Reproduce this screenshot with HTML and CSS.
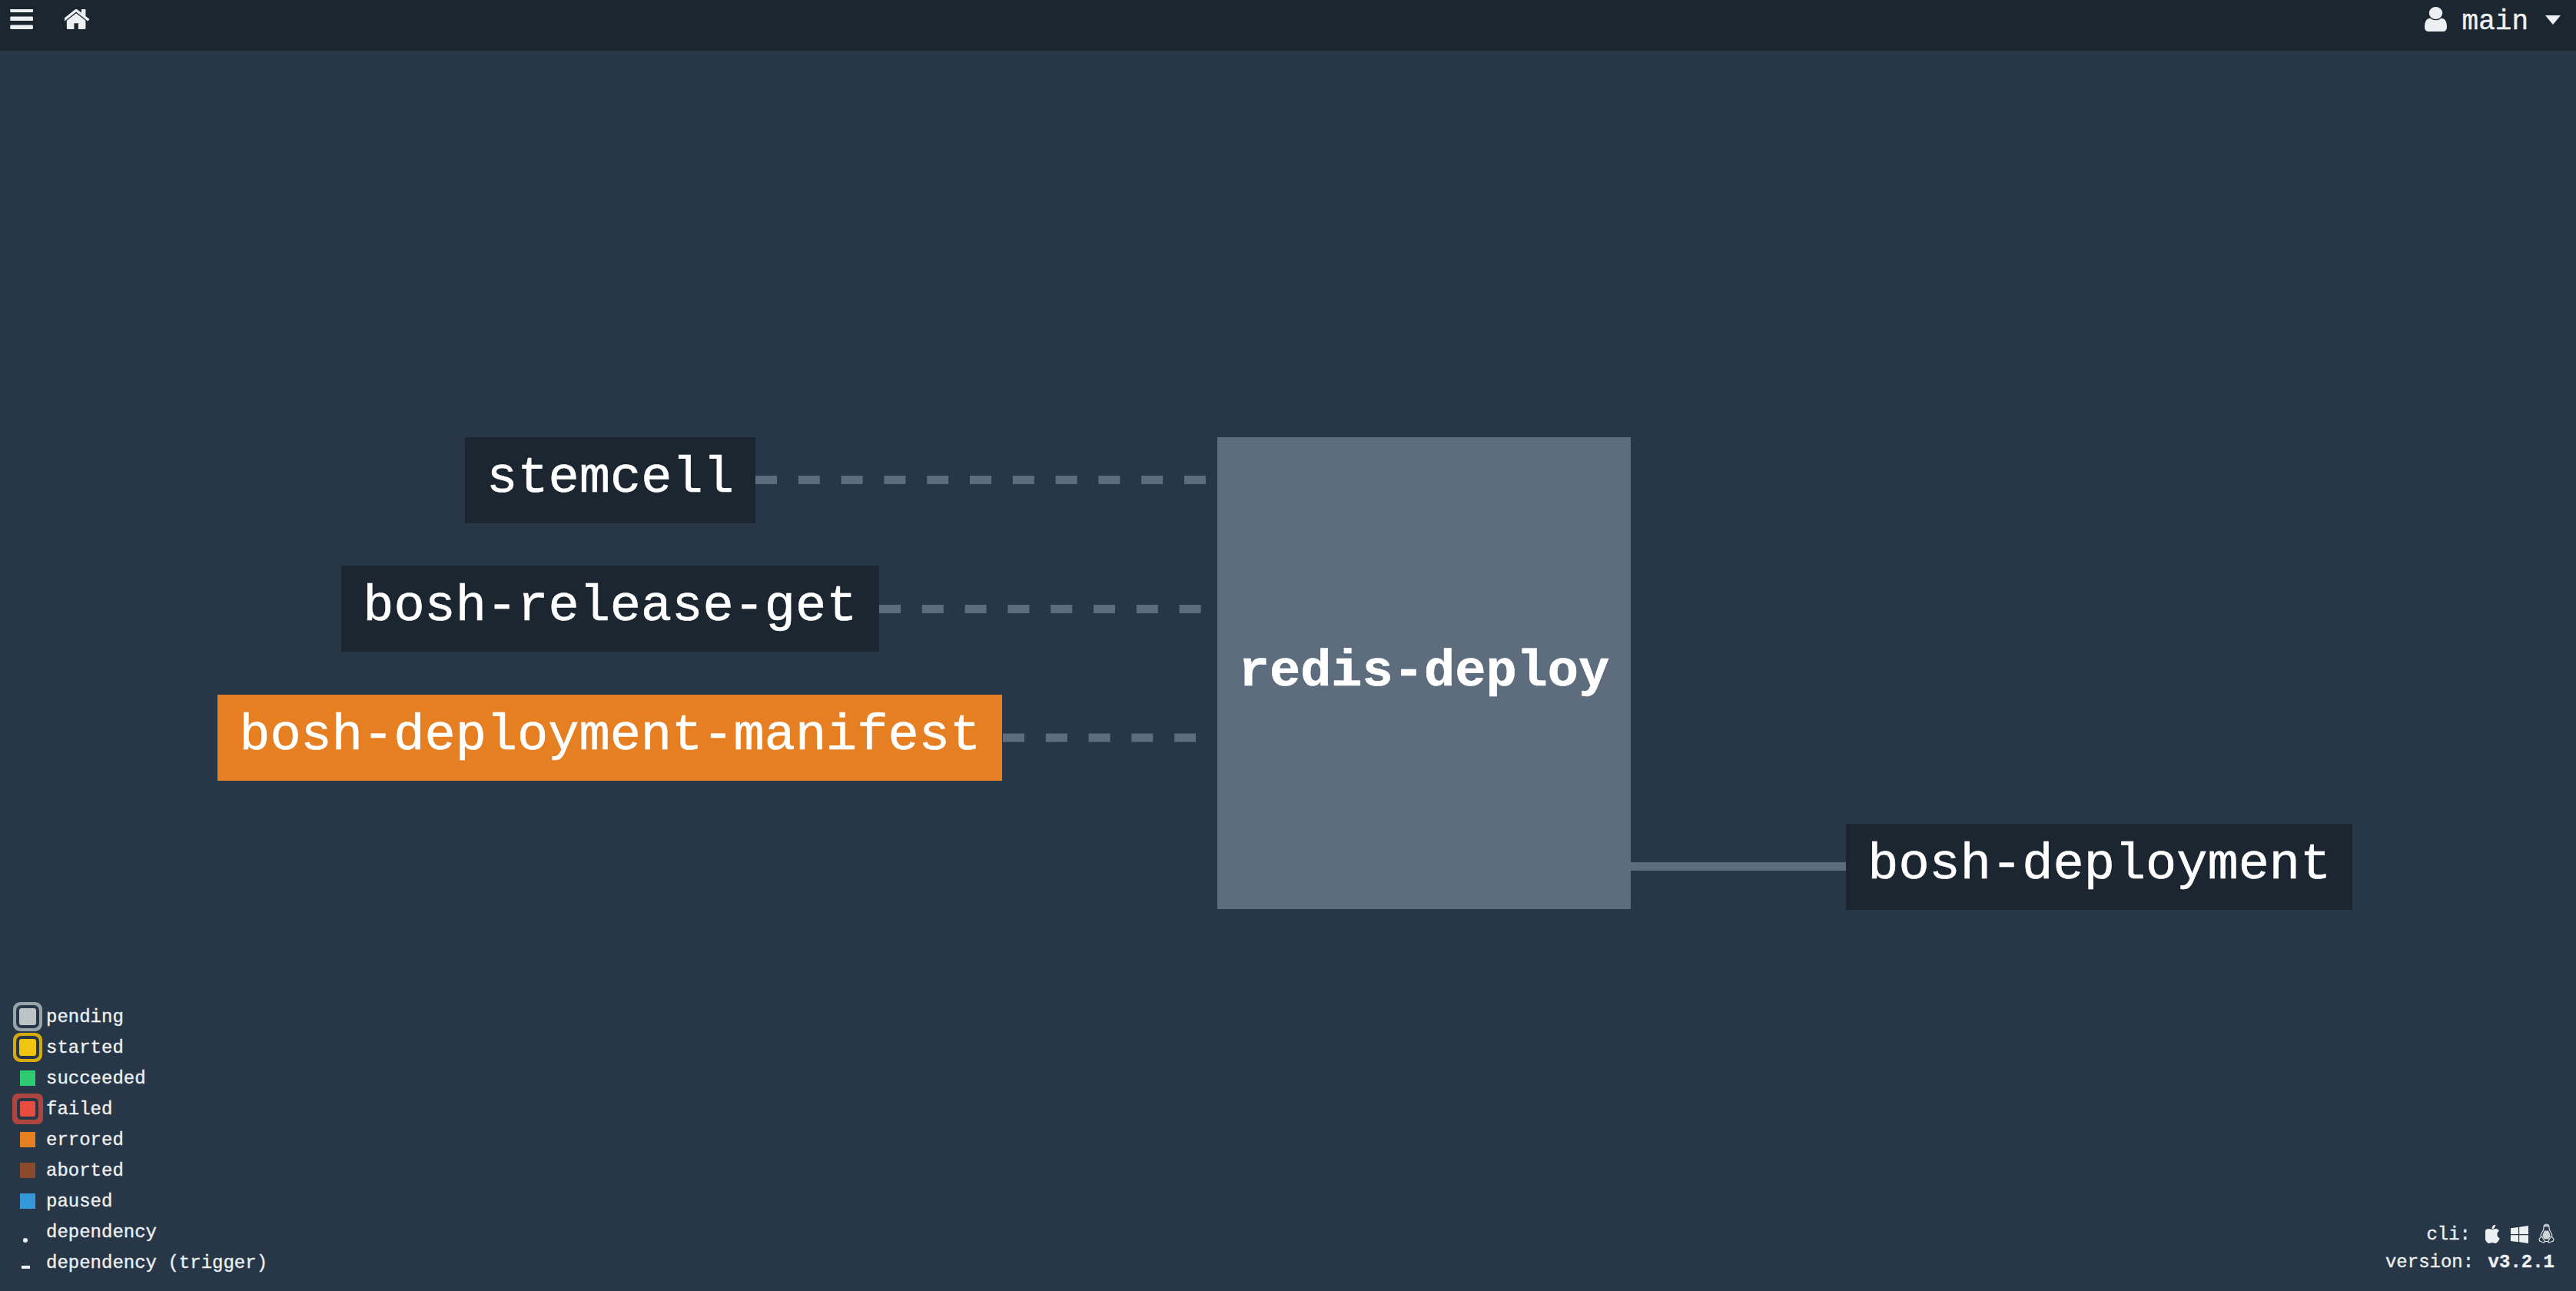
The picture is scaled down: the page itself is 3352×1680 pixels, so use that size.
FILE: index.html
```html
<!DOCTYPE html>
<html lang="en">
<head>
    <meta charset="UTF-8">
    <meta name="viewport" content="width=device-width, initial-scale=1.0">
    <title>main - redis</title>
    <link rel="stylesheet" href="styles.css">
</head>
<body>
    <header class="topbar">
        <a class="bar-icon menu-icon" href="#">
            <svg viewBox="64 320 1600 1216" width="31" height="26" preserveAspectRatio="none"><path d="M1664 1344v128q0 26-19 45t-45 19h-1408q-26 0-45-19t-19-45v-128q0-26 19-45t45-19h1408q26 0 45 19t19 45zm0-512v128q0 26-19 45t-45 19h-1408q-26 0-45-19t-19-45v-128q0-26 19-45t45-19h1408q26 0 45 19t19 45zm0-512v128q0 26-19 45t-45 19h-1408q-26 0-45-19t-19-45v-128q0-26 19-45t45-19h1408q26 0 45 19t19 45z"/></svg>
        </a>
        <a class="bar-icon home-icon" href="#">
            <svg viewBox="122 256 1548 1280" width="33" height="26" preserveAspectRatio="none"><path d="M1408 992v480q0 26-19 45t-45 19h-384v-384h-256v384h-384q-26 0-45-19t-19-45v-480q0-1 .5-3t.5-3l575-474 575 474q1 2 1 6zm223-69l-62 74q-8 9-21 11h-3q-13 0-21-7l-692-577-692 577q-12 8-24 7-13-2-21-11l-62-74q-8-10-7-23.500t11-21.500l719-599q32-26 76-26t76 26l244 204v-195q0-14 9-23t23-9h192q14 0 23 9t9 23v408l219 182q10 8 11 21.500t-7 23.500z"/></svg>
        </a>
        <div class="user-menu">
            <svg class="user-icon" viewBox="256 128 1280 1536" width="29" height="32" preserveAspectRatio="none"><path d="M1536 1399q0 109-62.500 187t-150.500 78h-854q-88 0-150.500-78t-62.500-187q0-85 8.500-160.500t31.500-152 58.500-131 94-89 134.500-34.500q131 128 313 128t313-128q76 0 134.500 34.500t94 89 58.500 131 31.500 152 8.500 160.500zm-256-887q0 159-112.500 271.500t-271.500 112.500-271.500-112.500-112.500-271.500 112.500-271.500 271.500-112.500 271.500 112.500 112.500 271.500z"/></svg>
            <span class="user-name">main</span>
            <span class="caret"></span>
        </div>
    </header>

    <main class="pipeline">
        <svg class="edges" width="3352" height="1614">
            <line class="edge-optional" x1="983" y1="558.500" x2="1569" y2="558.500"/>
            <line class="edge-optional" x1="1144" y1="726.500" x2="1563" y2="726.500"/>
            <line class="edge-optional" x1="1305" y1="894" x2="1556" y2="894"/>
            <line class="edge-solid" x1="2122" y1="1061.500" x2="2402" y2="1061.500"/>
        </svg>

        <a class="node node-stemcell" href="#">stemcell</a>
        <a class="node node-release" href="#">bosh-release-get</a>
        <a class="node node-manifest errored" href="#">bosh-deployment-manifest</a>
        <a class="node-job" href="#">redis-deploy</a>
        <a class="node node-deployment" href="#">bosh-deployment</a>

        <ul class="legend">
            <li><span class="swatch"><i class="dot pending"></i></span>pending</li>
            <li><span class="swatch"><i class="dot started"></i></span>started</li>
            <li><span class="swatch"><i class="dot succeeded"></i></span>succeeded</li>
            <li><span class="swatch"><i class="dot failed"></i></span>failed</li>
            <li><span class="swatch"><i class="dot errored"></i></span>errored</li>
            <li><span class="swatch"><i class="dot aborted"></i></span>aborted</li>
            <li><span class="swatch"><i class="dot paused"></i></span>paused</li>
            <li><span class="swatch"><i class="dep-dot"></i></span>dependency</li>
            <li><span class="swatch"><i class="dep-dash"></i></span>dependency (trigger)</li>
        </ul>

        <div class="cli-info">
            <div class="cli-row">
                <span>cli:</span>
                <svg class="cli-apple" viewBox="120 42 1290 1620" width="19" height="24" preserveAspectRatio="none"><path d="M1393 1215q-39 125-123 250-129 196-257 196-49 0-140-32-86-32-151-32-61 0-142 33-81 34-132 34-152 0-301-259-147-261-147-503 0-228 113-374 112-144 284-144 72 0 177 30 104 30 138 30 45 0 143-34 102-34 173-34 119 0 213 65 52 36 104 100-79 67-114 118-65 94-65 207 0 124 69 223t158 126zm-376-1173q0 61-29 136-29 75-90 133-52 52-104 69-36 11-101 17 3-149 78-257 74-107 246-147 1 3 2.500 11t2.500 11q0 4 .5 10t.5 10z"/></svg>
                <svg class="cli-windows" viewBox="0 0 23 23" width="23" height="23"><path d="M0 3.300l10-1.400v9.100h-10zM11.200 1.700l11.800-1.700v11h-11.800zM0 12.200h10v9.100l-10-1.400zM11.200 12.200h11.800v10.800l-11.800-1.700z"/></svg>
                <svg class="cli-linux" viewBox="0 0 21 26" width="21" height="26">
                    <path class="tux-line" d="M10.500 1c-2.600 0-3.600 2-3.500 4.500.1 2-.4 3.200-1.400 4.700-1.500 2.200-2.500 4.300-2.700 6.800"/>
                    <path class="tux-line" d="M10.500 1c2.600 0 3.600 2 3.500 4.500-.1 2 .4 3.200 1.400 4.700 1.500 2.200 2.500 4.300 2.700 6.800"/>
                    <path class="tux-line" d="M3.900 17.500c-1.200.8-2.700 1.700-2.900 3-.1 1 .6 1.400.6 2.400 1.600.4 3 1.200 4.300 1.900 1.300.5 2.100-.3 2.200-1.300.1-1.700-1.800-3.300-2.800-5-.5-.9-1-1.300-1.400-1z"/>
                    <path class="tux-line" d="M17.100 17.500c1.200.8 2.700 1.700 2.900 3 .1 1-.6 1.400-.6 2.400-1.600.4-3 1.200-4.300 1.900-1.300.5-2.100-.3-2.200-1.300-.1-1.700 1.800-3.300 2.800-5 .5-.9 1-1.300 1.400-1z"/>
                    <path class="tux-line" d="M8.100 23.500h4.800"/>
                    <path d="M10.500 9.500c1 0 2.100-.6 2.100-.6 1.700 2.500 3.100 5.300 2.900 8.300l-2.600 3.300h-4.800l-2.600-3.300c-.2-3 1.200-5.800 2.900-8.300 0 0 1.100.6 2.100.6z" opacity=".85"/>
                    <path d="M7.800 4.500c.1-1.800 1-3 2.700-3s2.600 1.200 2.700 3z" opacity=".75"/>
                </svg>
            </div>
            <div class="version-row">version: <b>v3.2.1</b></div>
        </div>
    </main>
</body>
</html>
```

FILE: styles.css
```css
* {
    box-sizing: border-box;
}
html, body {
    height: 100%;
}
body {
    margin: 0;
    display: flex;
    flex-direction: column;
    overflow: hidden;
    background-color: #283748;
    color: #ecf0f1;
    font-family: "Liberation Mono", monospace;
}
a {
    color: inherit;
    text-decoration: none;
}
svg {
    display: block;
    fill: #ecf0f1;
}

.topbar {
    flex: 0 0 66px;
    display: flex;
    align-items: flex-start;
    background-color: #1c2630;
}
.bar-icon {
    display: block;
    padding-top: 12px;
}
.menu-icon {
    margin-left: 12px;
}
.home-icon {
    margin-left: 41px;
}
.user-menu {
    margin-left: auto;
    margin-right: 20px;
    padding-top: 9px;
    display: flex;
    align-items: flex-start;
}
.user-name {
    margin-left: 20px;
    padding-top: 2px;
    font-size: 36px;
    line-height: 36px;
    -webkit-text-stroke: 0.4px #ecf0f1;
}
.caret {
    margin: 11px 0 0 22px;
    width: 0;
    height: 0;
    border-left: 10.500px solid transparent;
    border-right: 10.500px solid transparent;
    border-top: 12px solid #ecf0f1;
}

.pipeline {
    flex: 1;
    position: relative;
}
.edges {
    position: absolute;
    left: 0;
    top: 0;
}
.edge-optional, .edge-solid {
    stroke: #5d6d7e;
    stroke-width: 11;
}
.edge-optional {
    stroke-dasharray: 28 27.800;
}

.node, .node-job {
    position: absolute;
    color: #fff;
    font-size: 67px;
    white-space: nowrap;
    -webkit-text-stroke: 0.6px #fff;
}
.node {
    height: 112px;
    padding: 0 28.200px;
    line-height: 106px;
    background-color: #1c2630;
}
.node.errored {
    background-color: #e67e22;
}
.node-stemcell {
    left: 605px;
    top: 503px;
}
.node-release {
    left: 444px;
    top: 670px;
}
.node-manifest {
    left: 283px;
    top: 838px;
}
.node-deployment {
    left: 2402px;
    top: 1006px;
}
.node-job {
    left: 1584px;
    top: 503px;
    width: 538px;
    height: 614px;
    padding-bottom: 4px;
    display: flex;
    align-items: center;
    justify-content: center;
    background-color: #5d6d7e;
    font-weight: bold;
}

.legend {
    position: absolute;
    left: 16px;
    bottom: 17px;
    margin: 0;
    padding: 0;
    list-style: none;
    font-size: 24px;
    -webkit-text-stroke: 0.35px #ecf0f1;
}
.legend li {
    display: flex;
    align-items: center;
    height: 40px;
}
.swatch {
    flex: 0 0 40px;
    height: 40px;
    margin-right: 4px;
    display: flex;
    align-items: center;
    justify-content: center;
}
.dot {
    display: block;
    width: 20px;
    height: 20px;
}
.dot.pending {
    width: 22px;
    height: 22px;
    border-radius: 3px;
    background-color: #bdc3c7;
    box-shadow: 0 0 0 4px #283748, 0 0 0 8px #98a3aa;
}
.dot.started {
    width: 22px;
    height: 22px;
    border-radius: 3px;
    background-color: #f1c40f;
    box-shadow: 0 0 0 4px #283748, 0 0 0 8px #d4ac0d;
}
.dot.succeeded {
    background-color: #2ecc71;
}
.dot.failed {
    border-radius: 2px;
    background-color: #e74c3c;
    box-shadow: 0 0 0 4px #283748, 0 0 0 10px #ad4540;
}
.dot.errored {
    background-color: #e67e22;
}
.dot.aborted {
    background-color: #8b4a2b;
}
.dot.paused {
    background-color: #3498db;
}
.dep-dot {
    display: block;
    width: 6px;
    height: 6px;
    margin: 22px 6px 0 0;
    border-radius: 50%;
    background-color: #ecf0f1;
}
.dep-dash {
    display: block;
    width: 11px;
    height: 4px;
    margin: 12px 5px 0 0;
    background-color: #ecf0f1;
}

.cli-info {
    position: absolute;
    right: 28px;
    bottom: 19px;
    font-size: 24px;
    line-height: 36px;
    text-align: right;
    -webkit-text-stroke: 0.35px #ecf0f1;
}
.cli-row {
    display: flex;
    justify-content: flex-end;
    align-items: center;
}
.cli-row svg {
    -webkit-text-stroke: 0;
}
.cli-apple {
    margin: 0 0 3px 19px;
}
.cli-windows {
    margin: 0 0 1px 14px;
}
.cli-linux {
    margin: 0 0 4px 13px;
}
.tux-line {
    fill: none;
    stroke: #ecf0f1;
    stroke-width: 1.100;
}
.version-row b {
    margin-left: 4px;
}
```
